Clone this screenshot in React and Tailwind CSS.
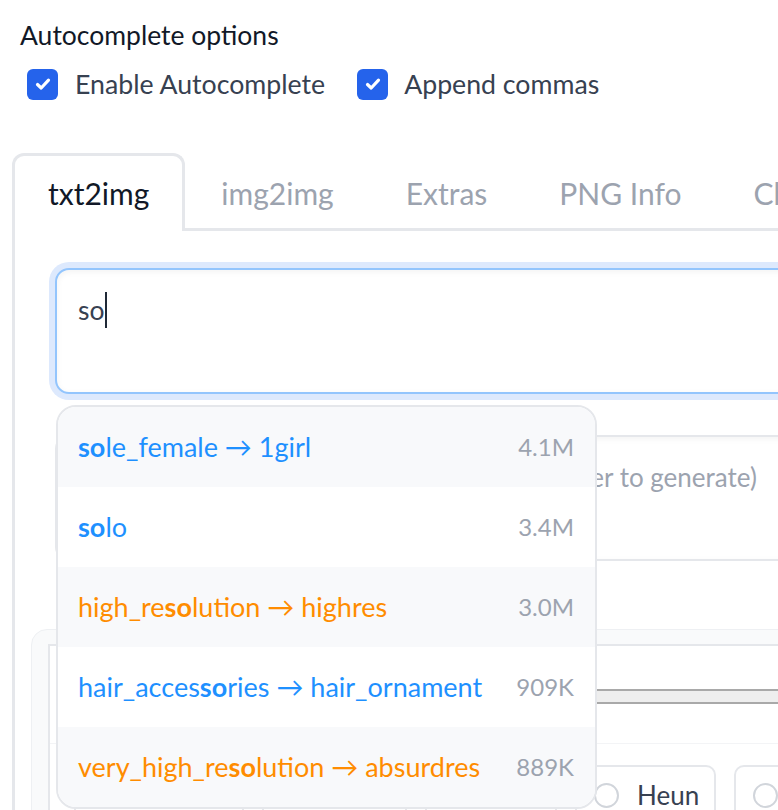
import React from "react";

function Check() {
  return (
    <div className="w-[31px] h-[31px] rounded-[6px] bg-[#2563eb] flex items-center justify-center shrink-0">
      <svg width="18" height="18" viewBox="0 0 18 18" fill="none">
        <path d="M3.5 9.5 L7.2 13 L14.5 5.2" stroke="white" strokeWidth="3.2" strokeLinecap="round" strokeLinejoin="round" />
      </svg>
    </div>
  );
}

const rows = [
  { parts: [["so", true], ["le_female → 1girl", false]], c: "text-[#1e90ff]", n: "4.1M", bg: "bg-[#f8f9fb]" },
  { parts: [["so", true], ["lo", false]], c: "text-[#1e90ff]", n: "3.4M", bg: "bg-white" },
  { parts: [["high_re", false], ["so", true], ["lution → highres", false]], c: "text-[#ff8c00]", n: "3.0M", bg: "bg-[#f8f9fb]" },
  { parts: [["hair_acces", false], ["so", true], ["ries → hair_ornament", false]], c: "text-[#1e90ff]", n: "909K", bg: "bg-white" },
  { parts: [["very_high_re", false], ["so", true], ["lution → absurdres", false]], c: "text-[#ff8c00]", n: "889K", bg: "bg-[#f8f9fb]" },
];

function Radio({ label, w }) {
  return (
    <div className={`h-[60px] shrink-0 rounded-[10px] border-2 border-[#e5e7eb] bg-white flex items-center pl-[17px] pr-[18px] gap-[18px] ${w || ""}`}>
      <div className="w-[25px] h-[25px] rounded-full border-2 border-[#d1d5db] bg-white shrink-0" />
      <span className="text-[26px] leading-[36px] text-[#374151] whitespace-nowrap">{label}</span>
    </div>
  );
}

export default function App() {
  return (
    <div className="relative w-[778px] h-[810px] overflow-hidden bg-white font-['Lato',sans-serif]">
      <div className="w-[1100px]">
        <div className="pl-[20px] pt-[17px]">
          <div className="text-[26.5px] leading-[36px] text-[#111827]">Autocomplete options</div>
          <div className="mt-[13px] flex items-center h-[36px] pl-[7px]">
            <Check />
            <span className="ml-[17px] text-[26.7px] leading-[36px] text-[#374151]">Enable Autocomplete</span>
            <div className="ml-[32px]"><Check /></div>
            <span className="ml-[16px] text-[26.7px] leading-[36px] text-[#374151]">Append commas</span>
          </div>
        </div>

        <div className="mt-[51px] ml-[12px]">
          <div className="flex items-end border-b-[3px] border-[#e5e7eb]">
            <div className="-mb-[3px] bg-white border-[3px] border-b-0 border-[#e5e7eb] rounded-t-[12px] px-[33px] pt-[17px] pb-[18px] text-[30px] leading-[40px] text-[#111827]">
              txt2img
            </div>
            {["img2img", "Extras", "PNG Info", "Checkpoint Merger"].map((t) => (
              <div key={t} className="border-[3px] border-b-0 border-transparent px-[33px] pt-[17px] pb-[15px] text-[30px] leading-[40px] text-[#9ca3af] whitespace-nowrap">
                {t}
              </div>
            ))}
          </div>

          <div className="border-l-[3px] border-[#e5e7eb]">
            <div className="pl-[40px] pt-[37px]">
              <div className="h-[126px] rounded-[14px] border-2 border-[#93c5fd] bg-white shadow-[0_0_0_6px_#dde9fd,inset_0_2px_6px_rgba(0,0,0,0.05)] pl-[21px] pt-[22px]">
                <div className="flex items-center h-[36px]">
                  <span className="text-[26.5px] leading-[36px] text-[#374151]">so</span>
                  <span className="w-[2px] h-[36px] bg-[#1f2937]" />
                </div>
              </div>
              <div className="mt-[41px] h-[126px] rounded-[14px] border-2 border-[#e5e7eb] bg-white shadow-[inset_0_2px_6px_rgba(0,0,0,0.05)] pl-[21px] pt-[22px]">
                <span className="text-[26px] leading-[36px] text-[#9ca3af] whitespace-nowrap">
                  Negative prompt (press Ctrl+Enter or Alt+Enter to generate)
                </span>
              </div>
            </div>

            <div className="ml-[16px] mt-[68px] rounded-[16px] bg-[#f9fafb] border border-[#eef0f3] pl-[16px] pt-[14px]">
              <div className="border-2 border-[#e5e7eb] bg-white">
                <div className="h-[97px] pl-[20px] pt-[43px]">
                  <div className="h-[15px] border-y-2 border-[#a9a9a9] bg-[#eeeeee]" />
                </div>
                <div className="border-t border-[#f3f4f6] pt-[21px] pl-[24px] pb-[20px] flex gap-[18px]">
                  <Radio label="Euler a" w="w-[170px]" />
                  <Radio label="Euler" w="w-[145px]" />
                  <Radio label="LMS" w="w-[132px]" />
                  <Radio label="Heun" w="w-[141px]" />
                  <Radio label="DPM2" />
                  <Radio label="DPM2 a" />
                </div>
              </div>
            </div>
          </div>
        </div>
      </div>

      <div className="absolute left-[56px] top-[405px] w-[541px] rounded-[20px] border-2 border-[#e5e7eb] bg-white overflow-hidden">
        {rows.map((r, i) => (
          <div key={i} className={`h-[80px] flex items-center justify-between pl-[20px] pr-[21px] ${r.bg}`}>
            <span className={`text-[27px] whitespace-nowrap ${r.c}`}>
              {r.parts.map(([t, b], j) => (
                <span key={j} className={b ? "font-bold" : ""}>{t}</span>
              ))}
            </span>
            <span className="text-[24px] text-[#9ca3af]">{r.n}</span>
          </div>
        ))}
      </div>
    </div>
  );
}
